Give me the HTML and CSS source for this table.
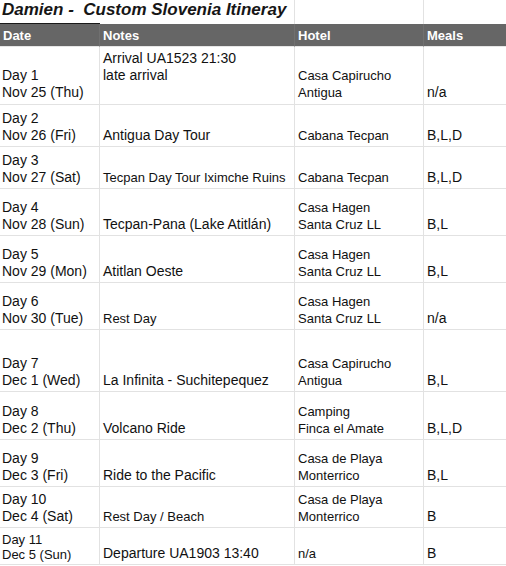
FILE: index.html
```html
<!DOCTYPE html>
<html lang="en">
<head>
<meta charset="utf-8">
<title>Damien - Custom Slovenia Itineray</title>
<link rel="stylesheet" href="styles.css">
</head>
<body>
<div class="sheet">
  <div class="cell title-cell"><span class="title">Damien -&nbsp; Custom Slovenia Itineray</span></div>
  <div class="cell blank"></div>
  <div class="cell blank"></div>
  <div class="cell blank last"></div>

  <div class="cell head">Date</div>
  <div class="cell head">Notes</div>
  <div class="cell head">Hotel</div>
  <div class="cell head last">Meals</div>

  <div class="cell date first-row"><div>Day 1</div><div>Nov 25 (Thu)</div></div>
  <div class="cell first-row"><div>Arrival UA1523 21:30</div><div>late arrival</div><div>&nbsp;</div></div>
  <div class="cell hotel first-row"><div>Casa Capirucho</div><div>Antigua</div></div>
  <div class="cell last first-row">n/a</div>

  <div class="cell date"><div>Day 2</div><div>Nov 26 (Fri)</div></div>
  <div class="cell">Antigua Day Tour</div>
  <div class="cell hotel">Cabana Tecpan</div>
  <div class="cell last">B,L,D</div>

  <div class="cell date"><div>Day 3</div><div>Nov 27 (Sat)</div></div>
  <div class="cell small">Tecpan Day Tour Iximche Ruins</div>
  <div class="cell hotel">Cabana Tecpan</div>
  <div class="cell last">B,L,D</div>

  <div class="cell date"><div>Day 4</div><div>Nov 28 (Sun)</div></div>
  <div class="cell">Tecpan-Pana (Lake Atitlán)</div>
  <div class="cell hotel"><div>Casa Hagen</div><div>Santa Cruz LL</div></div>
  <div class="cell last">B,L</div>

  <div class="cell date"><div>Day 5</div><div>Nov 29 (Mon)</div></div>
  <div class="cell">Atitlan Oeste</div>
  <div class="cell hotel"><div>Casa Hagen</div><div>Santa Cruz LL</div></div>
  <div class="cell last">B,L</div>

  <div class="cell date"><div>Day 6</div><div>Nov 30 (Tue)</div></div>
  <div class="cell small">Rest Day</div>
  <div class="cell hotel"><div>Casa Hagen</div><div>Santa Cruz LL</div></div>
  <div class="cell last">n/a</div>

  <div class="cell date"><div>Day 7</div><div>Dec 1 (Wed)</div></div>
  <div class="cell">La Infinita - Suchitepequez</div>
  <div class="cell hotel"><div>Casa Capirucho</div><div>Antigua</div></div>
  <div class="cell last">B,L</div>

  <div class="cell date"><div>Day 8</div><div>Dec 2 (Thu)</div></div>
  <div class="cell">Volcano Ride</div>
  <div class="cell hotel"><div>Camping</div><div>Finca el Amate</div></div>
  <div class="cell last">B,L,D</div>

  <div class="cell date"><div>Day 9</div><div>Dec 3 (Fri)</div></div>
  <div class="cell">Ride to the Pacific</div>
  <div class="cell hotel"><div>Casa de Playa</div><div>Monterrico</div></div>
  <div class="cell last">B,L</div>

  <div class="cell date"><div>Day 10</div><div>Dec 4 (Sat)</div></div>
  <div class="cell small">Rest Day / Beach</div>
  <div class="cell hotel"><div>Casa de Playa</div><div>Monterrico</div></div>
  <div class="cell last">B</div>

  <div class="cell date small-date"><div>Day 11</div><div>Dec 5 (Sun)</div></div>
  <div class="cell">Departure UA1903 13:40</div>
  <div class="cell hotel">n/a</div>
  <div class="cell last">B</div>
</div>
</body>
</html>
```
FILE: styles.css
```css
html, body {
  margin: 0;
  padding: 0;
  background: #ffffff;
}

body {
  font-family: "Liberation Sans", Arial, sans-serif;
  color: #111111;
  overflow: hidden;
}

.sheet {
  display: grid;
  grid-template-columns: 100px 195px 129px 82px;
  grid-template-rows: 24px 23px 58px 42px 42px 47px 47px 47px 62px 48px 47px 41px 37px;
  width: 506px;
}

.cell {
  box-sizing: border-box;
  border-right: 1px solid #e2e2e2;
  border-bottom: 1px solid #e2e2e2;
  display: flex;
  flex-direction: column;
  justify-content: flex-end;
  padding: 0 2px 2px 3px;
  font-size: 14px;
  line-height: 17px;
  white-space: nowrap;
  min-width: 0;
}

.cell.last {
  border-right: none;
}

.title-cell {
  border-right: none;
  border-bottom: 1px solid #1a1a1a;
  padding-left: 2px;
  padding-bottom: 3px;
  overflow: visible;
  position: relative;
  z-index: 1;
}

.blank {
  border-bottom: none;
}

.title {
  font-size: 17px;
  line-height: 20px;
  font-weight: bold;
  font-style: italic;
  color: #161616;
}

.head {
  background: #666666;
  color: #ffffff;
  font-weight: bold;
  font-size: 13px;
  border-right-color: #707070;
  border-bottom-color: #e6e6e6;
}

.date {
  padding-left: 2px;
}

.first-row {
  padding-bottom: 3px;
}

.hotel,
.small,
.small-date {
  font-size: 13px;
}

.small-date {
  line-height: 15px;
}
```
